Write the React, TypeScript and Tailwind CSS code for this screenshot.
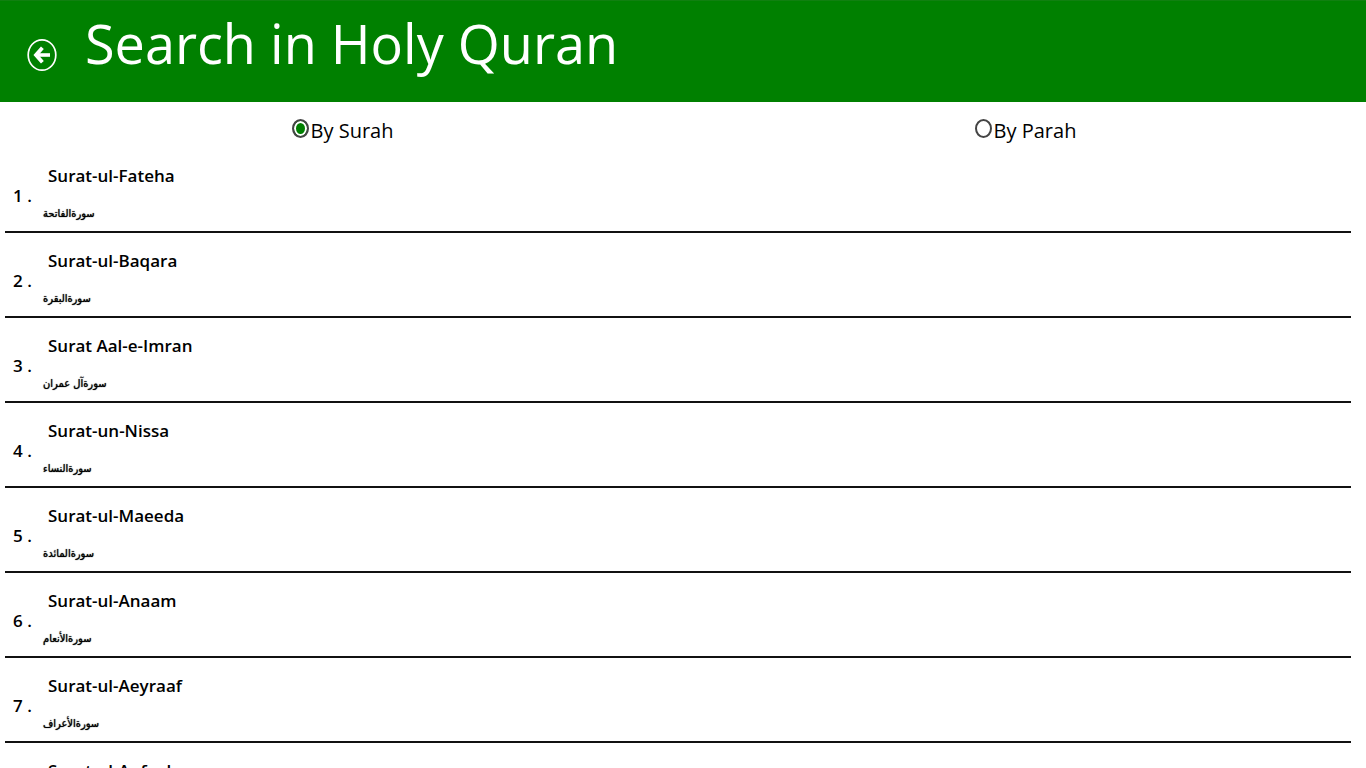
import { useState } from "react";

interface Surah {
  name: string;
  arabic: string;
}

const surahs: Surah[] = [
  { name: "Surat-ul-Fateha", arabic: "سورةالفاتحة" },
  { name: "Surat-ul-Baqara", arabic: "سورةالبقرة" },
  { name: "Surat Aal-e-Imran", arabic: "سورةآل عمران" },
  { name: "Surat-un-Nissa", arabic: "سورةالنساء" },
  { name: "Surat-ul-Maeeda", arabic: "سورةالمائدة" },
  { name: "Surat-ul-Anaam", arabic: "سورةالأنعام" },
  { name: "Surat-ul-Aeyraaf", arabic: "سورةالأعراف" },
  { name: "Surat-ul-Anfaal", arabic: "سورةالأنفال" },
];

const modes = [
  { id: "surah", label: "By Surah" },
  { id: "parah", label: "By Parah" },
];

function BackIcon() {
  return (
    <svg viewBox="0 0 30 34" className="h-[34px] w-[30px]" fill="none" stroke="currentColor" aria-hidden="true">
      <ellipse cx="15" cy="17" rx="13.8" ry="15.2" strokeWidth="1.7" />
      <path d="M23 17H9" strokeWidth="3.6" />
      <path d="M15.4 9.8L9 17L15.4 24.2" strokeWidth="3.8" />
    </svg>
  );
}

function SurahRow({ surah, index }: { surah: Surah; index: number }) {
  return (
    <li className="flex h-[85px] items-center border-b-2 border-[#111] pt-[13px] pl-2">
      <span className="w-[27px] text-[17px] font-semibold whitespace-nowrap">{index} .</span>
      <div className="flex flex-col items-start">
        <span className="pl-2 text-[17px] leading-9 font-semibold">{surah.name}</span>
        <span
          dir="rtl"
          lang="ar"
          className="pl-[3px] font-['DejaVu_Sans_Condensed','DejaVu_Sans',sans-serif] text-[11px] leading-10 text-shadow-[0_0_1px_#000]"
        >
          {surah.arabic}
        </span>
      </div>
    </li>
  );
}

export default function App() {
  const [mode, setMode] = useState("surah");

  return (
    <div className="h-screen overflow-hidden bg-white font-['Open_Sans',sans-serif] text-black">
      <header className="flex h-[102px] items-center border-t border-[#108010] bg-[#008000] pl-[27px] text-white">
        <button type="button" aria-label="Back" className="mt-[6px]">
          <BackIcon />
        </button>
        <h1 className="mb-[18px] pl-7 text-[54px] leading-[76px] whitespace-nowrap">Search in Holy Quran</h1>
      </header>
      <div className="grid h-[58px] grid-cols-2" role="radiogroup" aria-label="Search by">
        {modes.map((m) => (
          <label key={m.id} className="flex items-center justify-center gap-[2px] pl-[2px] text-xl">
            <input
              type="radio"
              name="mode"
              value={m.id}
              checked={mode === m.id}
              onChange={() => setMode(m.id)}
              className="mb-[6px] h-[19px] w-[17px] appearance-none rounded-[50%] border-2 border-[#444] bg-white checked:bg-[#008000] checked:shadow-[inset_0_0_0_2px_white]"
            />
            {m.label}
          </label>
        ))}
      </div>
      <ul className="-mt-3 mr-[15px] ml-[5px]">
        {surahs.map((s, i) => (
          <SurahRow key={s.name} surah={s} index={i + 1} />
        ))}
      </ul>
    </div>
  );
}
